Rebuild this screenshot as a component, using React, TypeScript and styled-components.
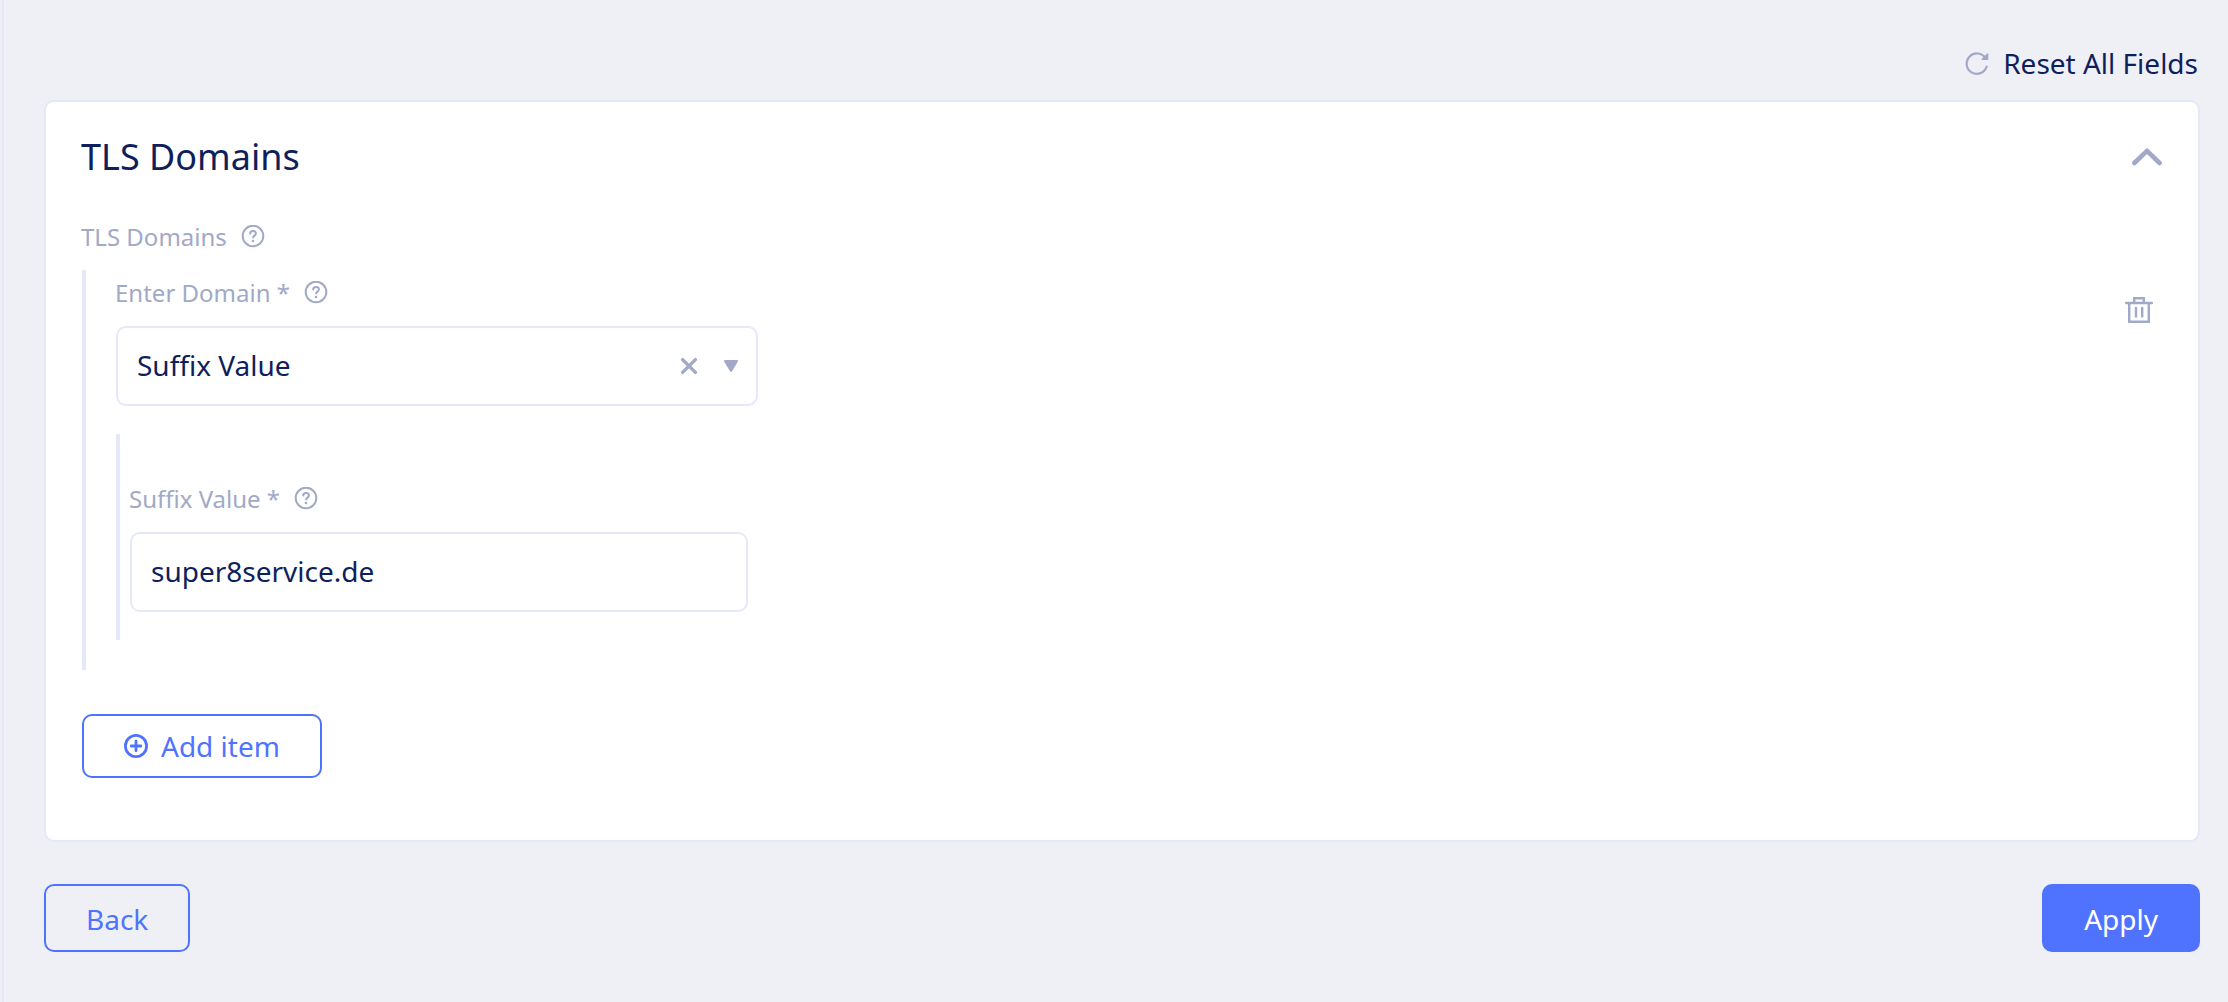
import React, { useState } from "react";
import styled, { createGlobalStyle, css } from "styled-components";

const color = {
  page: "#eff0f6",
  card: "#ffffff",
  line: "#e4e8f8",
  ink: "#0e1f5b",
  muted: "#a1a9c7",
  accent: "#4f73ff",
};

const GlobalStyle = createGlobalStyle`
  *, *::before, *::after { box-sizing: border-box; }
  body {
    margin: 0;
    background: ${color.page};
    color: ${color.ink};
    font: 28px/38px "Noto Sans", "Open Sans", sans-serif;
  }
  button, input, select { font: inherit; color: inherit; margin: 0; }
`;

const Page = styled.main`
  min-height: 100vh;
  margin-left: 2px;
  padding: 44px 28px 48px 40px;
  border-left: 2px solid ${color.line};
`;

const Toolbar = styled.div`
  display: flex;
  justify-content: flex-end;
  margin-bottom: 18px;
`;

const PlainButton = styled.button`
  display: inline-flex;
  align-items: center;
  padding: 0;
  border: 0;
  background: none;
  cursor: pointer;
`;

const ResetButton = styled(PlainButton)`
  gap: 14px;
  padding-right: 2px;
`;

const Card = styled.section`
  padding: 30px 36px 62px 35px;
  background: ${color.card};
  border: 2px solid ${color.line};
  border-radius: 10px;
`;

const CardHeader = styled.header`
  display: flex;
  align-items: center;
  justify-content: space-between;
  margin-bottom: 38px;
`;

const Title = styled.h2`
  margin: 0;
  font-size: 36px;
  line-height: 50px;
  font-weight: 400;
`;

const LabelRow = styled.div`
  display: flex;
  align-items: center;
  gap: 14px;
  margin-bottom: 16px;
  color: ${color.muted};
  font-size: 24px;
  line-height: 34px;
`;

const Item = styled.div`
  display: flex;
  align-items: flex-start;
  justify-content: space-between;
  margin: 0 0 44px 1px;
  padding: 6px 9px 30px 29px;
  border-left: 4px solid ${color.line};
`;

const Fields = styled.div`
  flex: 0 1 643px;
  min-width: 0;
`;

const NestedGroup = styled.div`
  margin: 28px 0 0 1px;
  padding: 48px 10px 28px 9px;
  border-left: 4px solid ${color.line};
`;

const controlBox = css`
  display: block;
  width: 100%;
  height: 80px;
  padding: 0 19px 2px;
  background: ${color.card};
  border: 2px solid ${color.line};
  border-radius: 10px;
  outline-color: ${color.accent};
`;

const Control = styled.div`
  position: relative;
  margin-left: 1px;
`;

const TextInput = styled.input`
  ${controlBox}
`;

const Select = styled.select`
  ${controlBox}
  padding-right: 96px;
  appearance: none;
`;

const SelectTools = styled.div`
  position: absolute;
  inset: 0 20px 0 auto;
  display: flex;
  align-items: center;
  gap: 26px;
  pointer-events: none;
`;

const ClearButton = styled(PlainButton)`
  pointer-events: auto;
`;

const TrashButton = styled(PlainButton)`
  margin-top: 20px;
`;

const Button = styled.button<{ $solid?: boolean; $compact?: boolean }>`
  display: inline-flex;
  align-items: center;
  justify-content: center;
  gap: 13px;
  height: ${(p) => (p.$compact ? 64 : 68)}px;
  padding: ${(p) => (p.$compact ? 0 : 2)}px 40px 0;
  border: 2px solid ${color.accent};
  border-radius: 10px;
  background: ${(p) => (p.$solid ? color.accent : "transparent")};
  color: ${(p) => (p.$solid ? "#ffffff" : color.accent)};
  cursor: pointer;
`;

const AddButton = styled(Button)`
  margin-left: 1px;
`;

const Footer = styled.footer`
  display: flex;
  justify-content: space-between;
  margin-top: 42px;
`;

const Icon = styled.svg<{ $tone?: string }>`
  display: block;
  flex: none;
  fill: none;
  stroke: ${(p) => p.$tone ?? color.muted};
  stroke-width: 2;
  stroke-linecap: round;
  stroke-linejoin: round;
`;

const HelpButton = ({ about }: { about: string }) => (
  <PlainButton type="button" aria-label={`Help: ${about}`}>
    <Icon width="24" height="24" viewBox="0 0 24 24">
      <circle cx="12" cy="11" r="10.3" />
      <path d="M9.2 8.6c0-1.5 1.2-2.5 2.8-2.5s2.9 1 2.9 2.4c0 2-2.7 2.2-2.7 4" />
      <circle cx="12" cy="16" r="1.3" fill={color.muted} stroke="none" />
    </Icon>
  </PlainButton>
);

const ResetIcon = () => (
  <Icon width="24" height="24" viewBox="0 0 24 24">
    <path d="M21.6 15.6A10.2 10.2 0 1 1 20.6 7.4" strokeWidth="2.2" />
    <path d="M22.6 3v5.200h-5.400z" fill={color.muted} strokeWidth="1.4" />
  </Icon>
);

const ChevronIcon = () => (
  <Icon width="30" height="18" viewBox="0 0 30 18">
    <path d="M2.4 15 15 2.8 27.6 15" strokeWidth="4.6" />
  </Icon>
);

const TrashIcon = () => (
  <Icon width="28" height="28" viewBox="0 0 28 28">
    <path
      d="M1.2 7h25.6M4.2 7v18.8h19.6V7M9.2 7V2.200h9.600V7M11 12v8.5M17.200 12v8.5"
      strokeWidth="2.4"
      strokeLinejoin="miter"
    />
  </Icon>
);

const CrossIcon = () => (
  <Icon width="18" height="18" viewBox="0 0 18 18">
    <path d="M2.6 2.6l12.8 12.8M15.4 2.6l-12.8 12.8" strokeWidth="3.4" />
  </Icon>
);

const TriangleIcon = () => (
  <Icon width="14" height="12" viewBox="0 0 14 12">
    <path d="M1 1h12L7 11z" fill={color.muted} />
  </Icon>
);

const PlusCircleIcon = () => (
  <Icon width="24" height="24" viewBox="0 0 24 24" $tone={color.accent}>
    <circle cx="12" cy="12" r="10.6" strokeWidth="2.8" />
    <path d="M12 7.2v9.6M7.2 12h9.6" strokeWidth="2.8" />
  </Icon>
);

export default function App() {
  const [kind, setKind] = useState("suffix");
  const [suffix, setSuffix] = useState("super8service.de");

  return (
    <>
      <GlobalStyle />
      <Page>
        <Toolbar>
          <ResetButton type="button">
            <ResetIcon />
            Reset All Fields
          </ResetButton>
        </Toolbar>

        <Card>
          <CardHeader>
            <Title>TLS Domains</Title>
            <PlainButton type="button" aria-label="Collapse section">
              <ChevronIcon />
            </PlainButton>
          </CardHeader>

          <LabelRow>
            <span>TLS Domains</span>
            <HelpButton about="TLS Domains" />
          </LabelRow>

          <Item>
            <Fields>
              <LabelRow>
                <label htmlFor="domain-kind">Enter Domain *</label>
                <HelpButton about="Enter Domain" />
              </LabelRow>
              <Control>
                <Select
                  id="domain-kind"
                  value={kind}
                  onChange={(e) => setKind(e.target.value)}
                >
                  <option value="" />
                  <option value="suffix">Suffix Value</option>
                </Select>
                <SelectTools>
                  <ClearButton
                    type="button"
                    aria-label="Clear selection"
                    onClick={() => setKind("")}
                  >
                    <CrossIcon />
                  </ClearButton>
                  <TriangleIcon />
                </SelectTools>
              </Control>

              <NestedGroup>
                <LabelRow>
                  <label htmlFor="suffix-value">Suffix Value *</label>
                  <HelpButton about="Suffix Value" />
                </LabelRow>
                <Control>
                  <TextInput
                    id="suffix-value"
                    type="text"
                    value={suffix}
                    onChange={(e) => setSuffix(e.target.value)}
                  />
                </Control>
              </NestedGroup>
            </Fields>

            <TrashButton type="button" aria-label="Delete item">
              <TrashIcon />
            </TrashButton>
          </Item>

          <AddButton type="button" $compact>
            <PlusCircleIcon />
            Add item
          </AddButton>
        </Card>

        <Footer>
          <Button type="button">Back</Button>
          <Button type="submit" $solid>
            Apply
          </Button>
        </Footer>
      </Page>
    </>
  );
}
